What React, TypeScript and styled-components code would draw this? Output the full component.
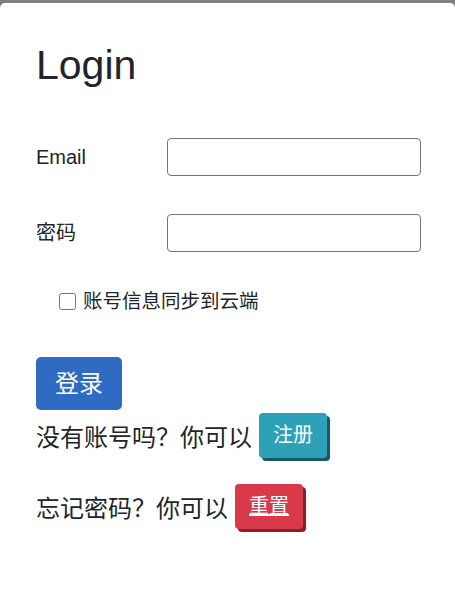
import React from "react";
import styled, { createGlobalStyle } from "styled-components";

const GlobalStyle = createGlobalStyle`
  html, body {
    margin: 0;
    padding: 0;
    background: #808080;
  }
  body {
    font-family: "Liberation Sans", "Noto Sans CJK SC", sans-serif;
    color: #212529;
  }
  * { box-sizing: border-box; }
`;

const Card = styled.div`
  margin-top: 3px;
  min-height: 591px;
  background: #ffffff;
  border-radius: 5px 5px 0 0;
  padding: 38px 34px 0 36px;
`;

const Title = styled.h1`
  margin: 0 0 49px 0;
  font-size: 41px;
  font-weight: 400;
  line-height: 48px;
  color: #212529;
`;

const FieldRow = styled.div`
  display: grid;
  grid-template-columns: 131px 1fr;
  align-items: center;
  margin-bottom: 38px;
`;

const Label = styled.label`
  font-size: 20px;
  line-height: 30px;
  color: #212529;
`;

const Input = styled.input`
  width: 100%;
  height: 38px;
  border: 1px solid #767676;
  border-radius: 4px;
  padding: 0 10px;
  font-size: 16px;
  background: #fff;
`;

const CheckRow = styled.label`
  display: flex;
  align-items: center;
  gap: 7px;
  margin: -4px 0 0 23px;
  font-size: 19.5px;
  line-height: 30px;
  color: #212529;
`;

const Check = styled.input`
  width: 17px;
  height: 17px;
  margin: 0;
  accent-color: #2f6ac3;
`;

const PrimaryButton = styled.button`
  display: block;
  margin-top: 41px;
  padding: 8px 19px;
  border: none;
  border-radius: 5px;
  background: #2f6ac3;
  color: #ffffff;
  font-family: "Liberation Sans", "Noto Sans CJK SC", sans-serif;
  font-size: 24px;
  line-height: 37px;
  cursor: pointer;
`;

const PromptRow = styled.div<{ $top: number }>`
  display: flex;
  align-items: center;
  gap: 7px;
  height: 49px;
  margin-top: ${(p) => p.$top}px;
  font-size: 24px;
  color: #212529;
`;

const ActionButton = styled.button<{ $bg: string; $shadow: string; $underline?: boolean }>`
  padding: 7px 14px 8px;
  border: none;
  border-radius: 4px;
  background: ${(p) => p.$bg};
  box-shadow: 3px 3px 0 ${(p) => p.$shadow};
  color: #ffffff;
  font-family: "Liberation Sans", "Noto Sans CJK SC", sans-serif;
  font-size: 20px;
  line-height: 30px;
  text-decoration: ${(p) => (p.$underline ? "underline" : "none")};
  text-underline-offset: 1px;
  cursor: pointer;
`;

export default function App() {
  return (
    <>
      <GlobalStyle />
      <Card>
        <Title>Login</Title>
        <FieldRow>
          <Label htmlFor="email">Email</Label>
          <Input id="email" type="text" />
        </FieldRow>
        <FieldRow>
          <Label htmlFor="pwd">密码</Label>
          <Input id="pwd" type="password" />
        </FieldRow>
        <CheckRow>
          <Check type="checkbox" />
          账号信息同步到云端
        </CheckRow>
        <PrimaryButton>登录</PrimaryButton>
        <PromptRow $top={1}>
          没有账号吗？你可以
          <ActionButton $bg="#2ca1b7" $shadow="#185a63">注册</ActionButton>
        </PromptRow>
        <PromptRow $top={22}>
          忘记密码？你可以
          <ActionButton $bg="#d93a49" $shadow="#86222d" $underline>
            重置
          </ActionButton>
        </PromptRow>
      </Card>
    </>
  );
}
